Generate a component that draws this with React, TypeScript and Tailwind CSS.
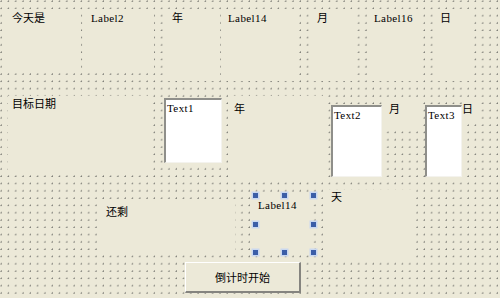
const grid =
  "bg-[#ECE9D8] bg-[radial-gradient(circle_at_1px_1px,#7a7a74_0.6px,transparent_0.75px)] bg-size-[7.3px_7.3px]";

const cjk = "font-[family-name:'Noto_Sans_CJK_SC',sans-serif] text-[11px] leading-[13px] text-black";
const latin = "font-[family-name:'Liberation_Serif',serif] text-[11px] leading-[12px] tracking-[0.4px] text-black";

function Handle({ pos }: { pos: string }) {
  return (
    <div className={`absolute ${pos} w-[5px] h-[5px] bg-[#3b5ea8] shadow-[0_0_0_1.5px_#c9d8f0]`} />
  );
}

export default function App() {
  return (
    <div className={`relative w-[500px] h-[298px] overflow-hidden ${grid}`}>
      {/* row 1 */}
      <div className={`absolute left-[7px] top-[9px] w-[74px] h-[64px] bg-[#ECE9D8] pl-[5px] pt-[2px] ${cjk}`}>今天是</div>
      <div className={`absolute left-[86px] top-[9px] w-[68px] h-[64px] bg-[#ECE9D8] pl-[5px] pt-[3px] ${latin}`}>Label2</div>
      <div className={`absolute left-[167px] top-[9px] w-[53px] h-[72px] bg-[#ECE9D8] pl-[5px] pt-[2px] ${cjk}`}>年</div>
      <div className={`absolute left-[224px] top-[9px] w-[73px] h-[72px] bg-[#ECE9D8] pl-[4px] pt-[3px] ${latin}`}>Label14</div>
      <div className={`absolute left-[311px] top-[9px] w-[46px] h-[72px] bg-[#ECE9D8] pl-[6px] pt-[2px] ${cjk}`}>月</div>
      <div className={`absolute left-[367px] top-[9px] w-[56px] h-[72px] bg-[#ECE9D8] pl-[7px] pt-[3px] ${latin}`}>Label16</div>
      <div className={`absolute left-[433px] top-[9px] w-[39px] h-[72px] bg-[#ECE9D8] pl-[7px] pt-[2px] ${cjk}`}>日</div>

      {/* row 2 */}
      <div className={`absolute left-[8px] top-[96px] w-[145px] h-[76px] bg-[#ECE9D8] pl-[4px] pt-[1px] ${cjk}`}>目标日期</div>
      <div className={`absolute left-[164px] top-[98px] w-[58px] h-[65px] bg-white border-t-2 border-l-2 border-[#8f8f8a] border-r border-b border-r-[#f4f3ee] border-b-[#f4f3ee] pl-[1px] pt-[2px] ${latin}`}>Text1</div>
      <div className={`absolute left-[228px] top-[96px] w-[95px] h-[82px] bg-[#ECE9D8] pl-[6px] pt-[6px] ${cjk}`}>年</div>
      <div className={`absolute left-[331px] top-[105px] w-[51px] h-[72px] bg-white border-t-2 border-l-2 border-[#8f8f8a] border-r border-b border-r-[#f4f3ee] border-b-[#f4f3ee] pl-[1px] pt-[2px] ${latin}`}>Text2</div>
      <div className={`absolute left-[384px] top-[100px] w-[38px] h-[30px] bg-[#ECE9D8] pl-[5px] pt-[2px] ${cjk}`}>月</div>
      <div className={`absolute left-[425px] top-[105px] w-[37px] h-[72px] bg-white border-t-2 border-l-2 border-[#8f8f8a] border-r border-b border-r-[#f4f3ee] border-b-[#f4f3ee] pl-[1px] pt-[2px] ${latin}`}>Text3</div>
      <div className={`absolute left-[462px] top-[100px] w-[16px] h-[20px] bg-[#ECE9D8] pt-[2px] ${cjk}`}>日</div>

      {/* row 3 */}
      <div className={`absolute left-[100px] top-[199px] w-[135px] h-[56px] bg-[#ECE9D8] pl-[6px] pt-[6px] ${cjk}`}>还剩</div>
      <div className={`absolute left-[255px] top-[196px] w-[58px] h-[57px] bg-[#ECE9D8] pl-[3px] pt-[3px] ${latin}`}>Label14</div>
      <div className={`absolute left-[326px] top-[190px] w-[90px] h-[72px] bg-[#ECE9D8] pl-[5px] ${cjk}`}>天</div>

      {/* selection handles */}
      <Handle pos="left-[253px] top-[193px]" />
      <Handle pos="left-[282px] top-[193px]" />
      <Handle pos="left-[311px] top-[193px]" />
      <Handle pos="left-[253px] top-[222px]" />
      <Handle pos="left-[311px] top-[222px]" />
      <Handle pos="left-[253px] top-[250px]" />
      <Handle pos="left-[282px] top-[250px]" />
      <Handle pos="left-[311px] top-[250px]" />

      {/* button */}
      <div className="absolute left-[185px] top-[262px] w-[116px] h-[31px] bg-[#ECE9D8] border-t border-l border-white border-r-2 border-b-2 border-r-[#85847f] border-b-[#85847f] flex items-center justify-center">
        <span className={cjk}>倒计时开始</span>
      </div>
    </div>
  );
}
